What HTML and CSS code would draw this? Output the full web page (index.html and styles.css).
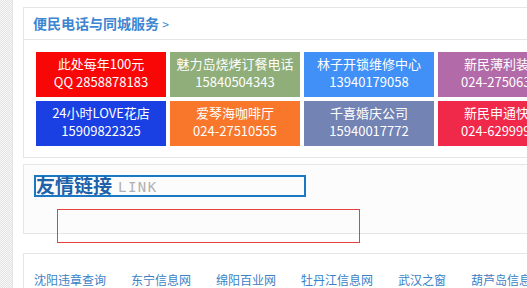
FILE: index.html
```html
<!DOCTYPE html>
<html lang="zh-CN">
<head>
    <meta charset="UTF-8">
    <title>便民电话与同城服务</title>
    <link rel="stylesheet" href="styles.css">
</head>
<body>
    <div class="side"></div>
    <div class="main">
        <div class="panel service">
            <div class="panel-head">便民电话与同城服务 <span class="more">&gt;</span></div>
            <div class="tiles">
                <a class="tile red">此处每年100元<br>QQ 2858878183</a>
                <a class="tile sage">魅力岛烧烤订餐电话<br>15840504343</a>
                <a class="tile sky">林子开锁维修中心<br>13940179058</a>
                <a class="tile plum">新民薄利装饰<br>024-27506388</a>
                <a class="tile cobalt">24小时LOVE花店<br>15909822325</a>
                <a class="tile orange">爱琴海咖啡厅<br>024-27510555</a>
                <a class="tile slate">千喜婚庆公司<br>15940017772</a>
                <a class="tile rose">新民申通快递<br>024-62999999</a>
            </div>
        </div>
        <div class="panel friends">
            <div class="friends-title"><span class="cn">友情链接</span><span class="en">LINK</span></div>
            <div class="friends-slot"></div>
        </div>
        <div class="panel links">
            <a>沈阳违章查询</a>
            <a>东宁信息网</a>
            <a>绵阳百业网</a>
            <a>牡丹江信息网</a>
            <a>武汉之窗</a>
            <a>葫芦岛信息网</a>
        </div>
    </div>
</body>
</html>
```

FILE: styles.css
```css
html {
    overflow: hidden;
}
body {
    margin: 0;
    display: flex;
    background-color: #fff;
    font-family: "Noto Sans CJK SC", "Noto Sans", sans-serif;
    height: 288px;
}
.side {
    flex: 0 0 12px;
    background-color: #f2f2f2;
    background-image: repeating-conic-gradient(#e4e4e4 0 25%, #f7f7f7 0 50%);
    background-size: 2px 2px;
    border-right: 1px solid #e2e2e2;
}
.main {
    flex: 0 0 1000px;
    padding-left: 10px;
    padding-top: 7px;
}
.panel {
    border: 1px solid #e6e6e6;
    background-color: #fff;
}
.panel-head {
    height: 31px;
    line-height: 31px;
    padding-left: 9px;
    font-size: 14px;
    font-weight: bold;
    color: #3c86d2;
    border-bottom: 1px solid #e6e6e6;
}
.panel-head .more {
    font-size: 12px;
    font-weight: normal;
}
.tiles {
    display: grid;
    grid-template-columns: repeat(4, 130px);
    gap: 4px;
    padding: 12px 12px 11px;
}
.tile {
    height: 45px;
    color: #fff;
    font-size: 13px;
    line-height: 18px;
    text-align: center;
    padding-top: 3px;
    box-sizing: border-box;
    white-space: nowrap;
}
.red { background-color: #f90707; }
.sage { background-color: #8fae79; }
.sky { background-color: #4190f8; }
.plum { background-color: #b36aa8; }
.cobalt { background-color: #1a3fe2; }
.orange { background-color: #f8772b; }
.slate { background-color: #7383b3; }
.rose { background-color: #f0284a; }
.friends {
    margin-top: 6px;
    height: 70px;
    padding: 10px;
    box-sizing: border-box;
    background-color: #fcfcfc;
}
.friends-title {
    width: 268px;
    height: 18px;
    border: 2px solid #1b79c3;
    display: flex;
    align-items: flex-end;
    gap: 6px;
}
.friends-title .cn {
    font-size: 19px;
    line-height: 20px;
    font-weight: bold;
    color: #2062aa;
}
.friends-title .en {
    font-size: 14px;
    line-height: 16px;
    letter-spacing: 1.5px;
    color: #b0b0b0;
    font-family: "DejaVu Sans Mono", monospace;
}
.friends-slot {
    width: 301px;
    height: 32px;
    margin: 12px 0 0 23px;
    border: 1px solid #e84040;
}
.links {
    margin-top: 19px;
    padding: 17px 10px;
    display: flex;
    gap: 25px;
}
.links a {
    font-size: 12px;
    color: #3b82c6;
}
```
